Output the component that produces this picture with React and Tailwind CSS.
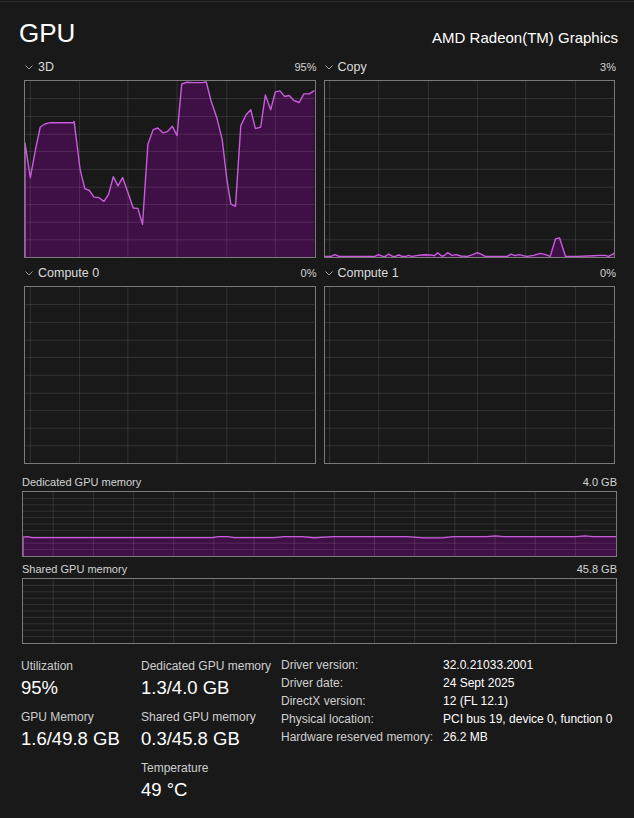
import React from "react";

const LINE = "#c75ddb";
const FILL = "#3f1045";
const GRID = "rgba(255,255,255,0.11)";

// points are in the coordinates of the viewBox of each graph
const threeD = [
  [12, 200], [28, 305], [44, 218], [58, 152], [72, 143], [88, 139], [158, 139], [160, 135],
  [178, 280], [192, 338], [206, 344], [220, 364], [234, 365], [250, 377], [264, 355], [278, 302],
  [292, 330], [306, 305], [322, 350], [338, 397], [352, 398], [366, 446], [382, 205], [398, 160],
  [412, 155], [428, 170], [442, 165], [456, 150], [470, 178], [484, 22], [498, 17], [520, 18],
  [546, 18], [558, 16], [572, 72], [590, 125], [606, 190], [620, 310], [632, 385], [646, 392],
  [662, 148], [678, 115], [692, 100], [706, 157], [722, 152], [736, 55], [752, 100], [766, 46],
  [780, 43], [794, 60], [808, 57], [822, 72], [838, 78], [852, 52], [868, 52], [884, 42],
];

const copy = [
  [10, 543], [28, 543], [40, 538], [52, 543], [160, 543], [172, 538], [184, 543], [192, 543],
  [202, 536], [214, 543], [222, 543], [232, 539], [244, 543], [254, 543], [262, 540], [272, 543],
  [286, 541], [300, 539], [314, 538], [330, 539], [340, 541], [350, 532], [362, 542], [368, 542],
  [380, 532], [394, 540], [406, 538], [420, 542], [440, 543], [456, 538], [470, 532], [484, 538],
  [494, 543], [560, 543], [572, 536], [584, 541], [596, 538], [608, 541], [620, 543], [640, 540],
  [660, 534], [676, 538], [690, 543], [706, 490], [718, 487], [736, 543], [770, 543], [820, 541],
  [840, 540], [856, 540], [866, 543], [876, 538], [884, 533],
];

const dedicated = [
  [0, 46.5], [4, 46], [9, 47], [190, 47], [196, 46], [205, 46], [212, 47], [252, 47], [262, 46],
  [280, 46], [292, 47.2], [312, 46], [385, 46], [402, 47.3], [420, 47.3], [432, 46], [465, 46],
  [474, 45.2], [482, 46], [555, 46], [564, 45.2], [572, 46], [595, 46],
];

const topH = [66, 120, 174, 226, 280, 334, 386, 440, 493];
const leftV = [28, 176, 322, 470, 620, 766];
const rightV = [24, 172, 322, 470, 616, 766];
const memV = Array.from({ length: 14 }, (_, i) => 30.3 + i * 40.3);
const memH = [6.6, 13.2, 19.8, 26.4, 33, 39.6, 46.2, 52.8, 59.4];

function Graph({ box, vlines, hlines, points, className }) {
  const [x0, y0, w, h] = box;
  const bottom = y0 + h;
  const line = points ? points.map((p) => p.join(",")).join(" ") : "";
  const fill = points
    ? `${points[0][0]},${bottom} ${line} ${points[points.length - 1][0]},${bottom}`
    : "";
  return (
    <div className={`border border-[#7a7a7a] bg-[#191919] ${className}`}>
      <svg
        className="block h-full w-full"
        viewBox={box.join(" ")}
        preserveAspectRatio="none"
      >
        {points && <polygon points={fill} fill={FILL} />}
        {vlines.map((x) => (
          <line key={"v" + x} x1={x} x2={x} y1={y0} y2={bottom} stroke={GRID} strokeWidth="1" vectorEffect="non-scaling-stroke" />
        ))}
        {hlines.map((y) => (
          <line key={"h" + y} x1={x0} x2={x0 + w} y1={y} y2={y} stroke={GRID} strokeWidth="1" vectorEffect="non-scaling-stroke" />
        ))}
        {points && (
          <polyline
            points={`${points[0][0]},${bottom} ${line}`}
            fill="none"
            stroke={LINE}
            strokeWidth="1.4"
            strokeLinejoin="round"
            vectorEffect="non-scaling-stroke"
          />
        )}
      </svg>
    </div>
  );
}

function Chevron() {
  return (
    <svg width="8" height="5" viewBox="0 0 8 5" className="ml-px">
      <path d="M0.5 0.5 L4 4 L7.5 0.5" fill="none" stroke="#9c9c9c" strokeWidth="1" />
    </svg>
  );
}

function GraphHeader({ label, value }) {
  return (
    <div className="flex h-4 items-center justify-between">
      <div className="flex items-center gap-[5px]">
        <Chevron />
        <span className="text-[12.5px] leading-4 text-[#dcdcdc]">{label}</span>
      </div>
      <span className="-mr-px text-[11px] leading-4 text-[#d4d4d4]">{value}</span>
    </div>
  );
}

function Stat({ label, value, className = "" }) {
  return (
    <div className={className}>
      <div className="text-[12px] leading-4 text-[#cfcfcf]">{label}</div>
      <div className="text-[18.5px] leading-7 text-white">{value}</div>
    </div>
  );
}

function Details() {
  const rows = [
    ["Driver version:", "32.0.21033.2001"],
    ["Driver date:", "24 Sept 2025"],
    ["DirectX version:", "12 (FL 12.1)"],
    ["Physical location:", "PCI bus 19, device 0, function 0"],
    ["Hardware reserved memory:", "26.2 MB"],
  ];
  return (
    <div className="-mt-[2px] grid grid-cols-[162px_auto] content-start self-start">
      {rows.map(([k, v]) => (
        <React.Fragment key={k}>
          <div className="text-[12px] leading-[18px] text-[#cfcfcf]">{k}</div>
          <div className="text-[12px] leading-[18px] text-white">{v}</div>
        </React.Fragment>
      ))}
    </div>
  );
}

export default function App() {
  return (
    <div className="h-[818px] w-[634px] overflow-hidden bg-[#191919] font-['Liberation_Sans',Arial,sans-serif]">
      <div className="mt-px h-px bg-[#2b2b2b]" />

      <div className="mt-[18px] flex items-start justify-between pl-[19px] pr-[16px]">
        <h1 className="text-[26px] leading-[26px] text-white">GPU</h1>
        <div className="mt-[8px] text-[15px] leading-5 text-white">AMD Radeon(TM) Graphics</div>
      </div>

      <div className="ml-[24px] mt-[11px] grid w-[591px] grid-cols-2 gap-x-[8px]">
        <div>
          <GraphHeader label="3D" value="95%" />
          <Graph className="mt-[5px] h-[178px]" box={[12, 13, 872, 532]} vlines={leftV} hlines={topH} points={threeD} />
        </div>
        <div>
          <GraphHeader label="Copy" value="3%" />
          <Graph className="mt-[5px] h-[178px]" box={[10, 13, 874, 532]} vlines={rightV} hlines={topH} points={copy} />
        </div>
        <div className="mt-[7px]">
          <GraphHeader label="Compute 0" value="0%" />
          <Graph className="mt-[5px] h-[178px]" box={[12, 13, 872, 532]} vlines={leftV} hlines={topH} />
        </div>
        <div className="mt-[7px]">
          <GraphHeader label="Compute 1" value="0%" />
          <Graph className="mt-[5px] h-[178px]" box={[10, 13, 874, 532]} vlines={rightV} hlines={topH} />
        </div>
      </div>

      <div className="ml-[22px] mt-[11px] w-[595px]">
        <div className="flex h-[14px] items-center justify-between text-[11px] leading-[14px] text-[#d4d4d4]">
          <span>Dedicated GPU memory</span>
          <span>4.0 GB</span>
        </div>
        <Graph className="mt-[2px] h-[66px]" box={[0, 0, 595, 66]} vlines={memV} hlines={memH} points={dedicated} />
        <div className="mt-[5px] flex h-[14px] items-center justify-between text-[11px] leading-[14px] text-[#d4d4d4]">
          <span>Shared GPU memory</span>
          <span>45.8 GB</span>
        </div>
        <Graph className="mt-[2px] h-[66px]" box={[0, 0, 595, 66]} vlines={memV} hlines={memH} />
      </div>

      <div className="mt-[14px] flex items-start pl-[21px]">
        <div className="flex w-[120px] flex-col gap-[7px]">
          <Stat label="Utilization" value="95%" />
          <Stat label="GPU Memory" value="1.6/49.8 GB" />
        </div>
        <div className="flex w-[140px] flex-col gap-[7px]">
          <Stat label="Dedicated GPU memory" value="1.3/4.0 GB" />
          <Stat label="Shared GPU memory" value="0.3/45.8 GB" />
          <Stat label="Temperature" value="49 °C" />
        </div>
        <Details />
      </div>
    </div>
  );
}
